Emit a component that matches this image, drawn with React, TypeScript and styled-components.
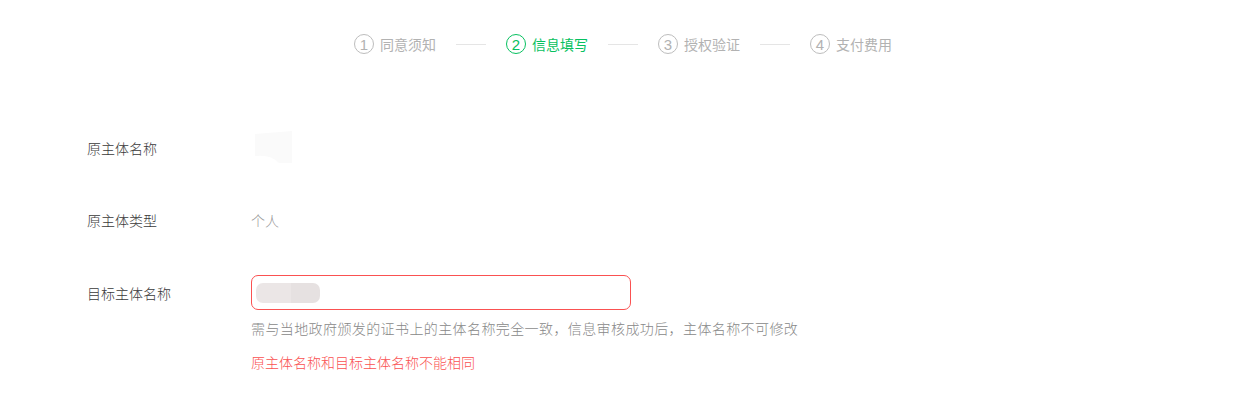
import React, { FC } from 'react'
import styled, { createGlobalStyle } from 'styled-components'

const GlobalStyle = createGlobalStyle`
    body {
        margin: 0;
        background: #fff;
        font-family: "Noto Sans CJK SC", "Noto Sans", sans-serif;
        font-size: 14px;
        color: #353535;
    }
`

const Page = styled.div`
    width: 1241px;
    min-height: 407px;
`

const Steps = styled.div`
    display: flex;
    justify-content: center;
    align-items: center;
    padding: 34px 0 0 5px;
    height: 20px;
`

const Step = styled.div<{ $active?: boolean }>`
    display: flex;
    align-items: center;
    gap: 6px;
    color: ${p => (p.$active ? '#07c160' : '#b2b2b2')};
    font-size: 14px;
    line-height: 20px;
`

const StepNum = styled.span<{ $active?: boolean }>`
    box-sizing: border-box;
    width: 20px;
    height: 20px;
    border-radius: 50%;
    border: 1px solid ${p => (p.$active ? '#07c160' : '#bdbdbd')};
    display: flex;
    align-items: center;
    justify-content: center;
    font-family: "Liberation Sans", Arial, sans-serif;
    font-size: 15px;
    line-height: 1;
`

const Connector = styled.span`
    width: 30px;
    height: 1px;
    margin: 0 20px;
    background: #e5e5e5;
`

const Form = styled.div`
    margin-top: 76px;
    padding-left: 87px;
    display: flex;
    flex-direction: column;
    gap: 36px;
`

const Row = styled.div`
    display: flex;
    align-items: flex-start;
    min-height: 36px;
`

const Label = styled.div<{ $top?: number }>`
    width: 164px;
    flex-shrink: 0;
    padding-top: ${p => p.$top ?? 8}px;
    line-height: 20px;
    color: #3a3a3a;
    font-weight: 300;
`

const Value = styled.div`
    padding-top: 8px;
    line-height: 20px;
    color: #999;
    font-weight: 300;
`

const Field = styled.div`
    display: flex;
    flex-direction: column;
`

const Input = styled.div`
    box-sizing: border-box;
    width: 380px;
    height: 35px;
    margin-top: 1px;
    border: 1px solid #fa5151;
    border-radius: 7px;
    display: flex;
    align-items: center;
    padding-left: 4px;
`

const Masked = styled.span`
    width: 64px;
    height: 20px;
    border-radius: 7px;
    background: linear-gradient(90deg, #ebe6e6 0 55%, #e6e1e1 55% 100%);
`

const Hint = styled.div<{ $error?: boolean }>`
    line-height: 20px;
    margin-top: ${p => (p.$error ? 14 : 8)}px;
    color: ${p => (p.$error ? '#fa5151' : '#888')};
    letter-spacing: ${p => (p.$error ? 0 : 0.4)}px;
    font-weight: 300;
`

const steps = ['同意须知', '信息填写', '授权验证', '支付费用']

const App: FC = () => {
    return (
        <Page>
            <GlobalStyle />
            <Steps>
                {steps.map((s, i) => (
                    <React.Fragment key={s}>
                        {i > 0 && <Connector />}
                        <Step $active={i === 1}>
                            <StepNum $active={i === 1}>{i + 1}</StepNum>
                            {s}
                        </Step>
                    </React.Fragment>
                ))}
            </Steps>
            <Form>
                <Row>
                    <Label>原主体名称</Label>
                    <svg width="42" height="34" viewBox="0 0 42 34">
                        <path d="M4 4 L41 1 L41 33 L28 33 Q20 24 4 26 Z" fill="#fafafa" />
                    </svg>
                </Row>
                <Row>
                    <Label>原主体类型</Label>
                    <Value>个人</Value>
                </Row>
                <Row>
                    <Label $top={9}>目标主体名称</Label>
                    <Field>
                        <Input>
                            <Masked />
                        </Input>
                        <Hint>需与当地政府颁发的证书上的主体名称完全一致，信息审核成功后，主体名称不可修改</Hint>
                        <Hint $error>原主体名称和目标主体名称不能相同</Hint>
                    </Field>
                </Row>
            </Form>
        </Page>
    )
}

export default App
